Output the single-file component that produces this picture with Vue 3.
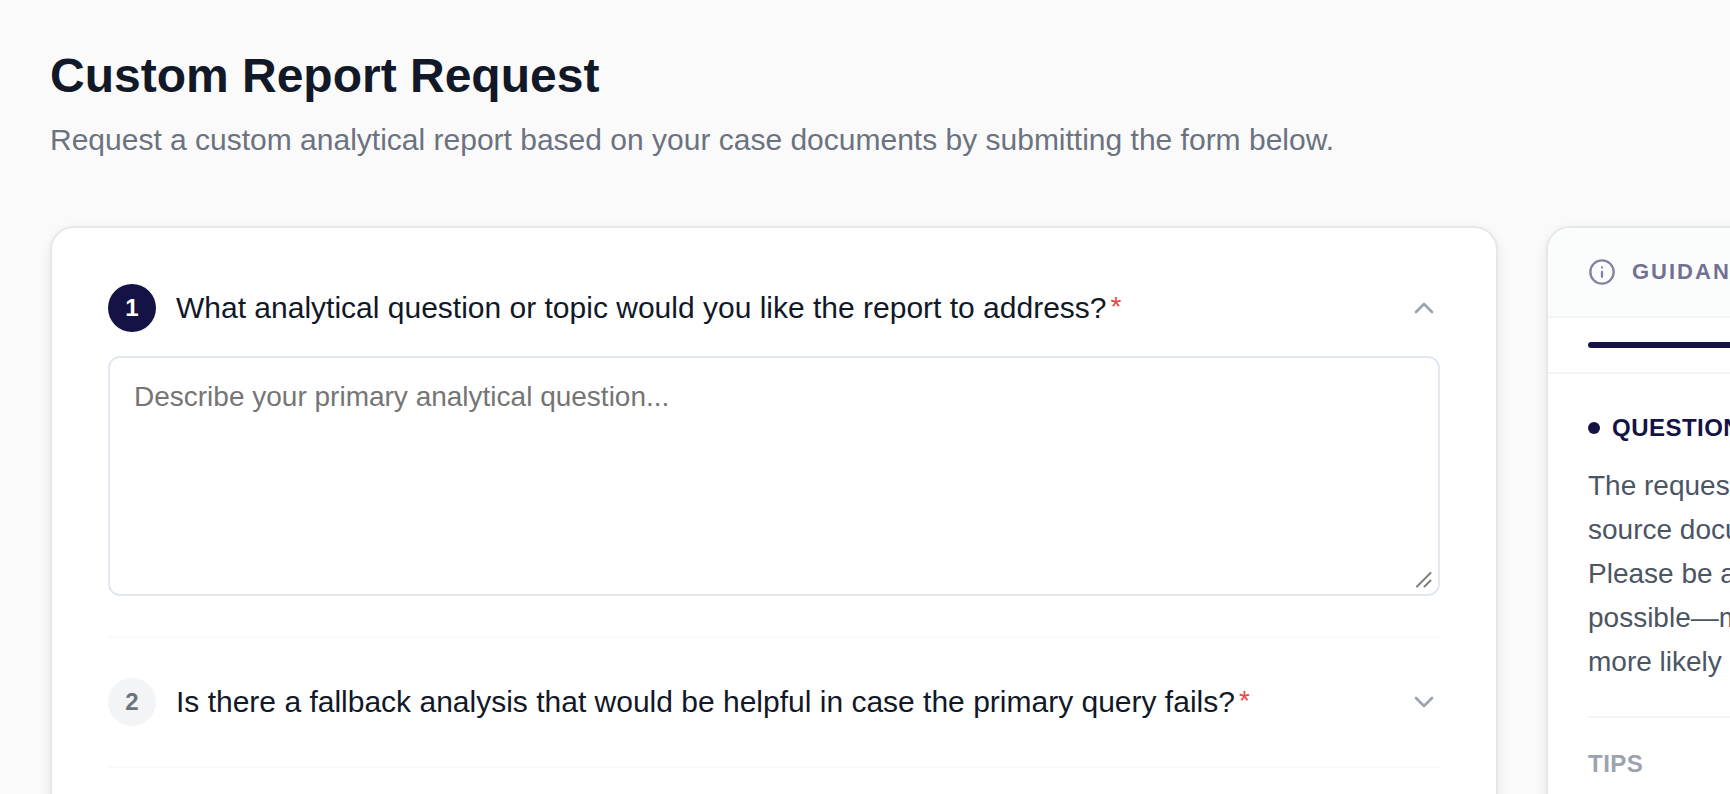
<template>
  <div class="page">
    <header class="page-header">
      <h1>Custom Report Request</h1>
      <p>Request a custom analytical report based on your case documents by submitting the form below.</p>
    </header>

    <div class="layout">
      <form class="card" @submit.prevent>
        <section v-for="(q, i) in questions" :key="i" class="question">
          <div class="question-header">
            <span class="badge" :class="{ active: open === i }">{{ i + 1 }}</span>
            <label :for="'answer-' + i" @click="open = i">{{ q.label }}<span class="required">*</span></label>
            <button type="button" class="toggle" :aria-label="'Toggle question ' + (i + 1)" @click="toggle(i)">
              <svg viewBox="0 0 24 24">
                <path :d="open === i ? 'M18 15l-6-6-6 6' : 'M6 9l6 6 6-6'" />
              </svg>
            </button>
          </div>
          <div v-show="open === i" class="answer">
            <textarea :id="'answer-' + i" v-model="q.answer" :placeholder="q.placeholder"></textarea>
            <svg class="grip" viewBox="0 0 16 16">
              <path d="M1 14.5L14.5 1M8.5 14.5l6-6" />
            </svg>
          </div>
        </section>
      </form>

      <aside class="card guidance">
        <div class="guidance-header">
          <svg viewBox="0 0 24 24">
            <circle cx="12" cy="12" r="10" />
            <path d="M12 16v-4M12 8h.01" />
          </svg>
          <h2>GUIDANCE</h2>
        </div>
        <div class="progress"><div class="bar"></div></div>
        <div class="guidance-body">
          <h3><span class="dot"></span>QUESTION {{ open + 1 }}</h3>
          <p>
            <span v-for="line in guidance" :key="line">{{ line }}</span>
          </p>
          <h4>TIPS</h4>
        </div>
      </aside>
    </div>
  </div>
</template>

<script setup>
import { ref } from 'vue'

const open = ref(0)

const questions = ref([
  {
    label: 'What analytical question or topic would you like the report to address?',
    placeholder: 'Describe your primary analytical question...',
    answer: ''
  },
  {
    label: 'Is there a fallback analysis that would be helpful in case the primary query fails?',
    placeholder: '',
    answer: ''
  }
])

const guidance = [
  'The requested',
  'source documents',
  'Please be as',
  'possible—more',
  'more likely'
]

const toggle = (i) => {
  open.value = open.value === i ? -1 : i
}
</script>

<style>
body {
  background: #fafafa;
}
</style>

<style scoped>
.page {
  box-sizing: border-box;
  height: 100vh;
  overflow: hidden;
  padding: 48px 0 0 50px;
  font-family: "Liberation Sans", Arial, sans-serif;
  color: #111827;
}
h1, h2, h3, h4, p {
  margin: 0;
}
.page-header {
  margin-bottom: 64px;
}
h1 {
  font-size: 48px;
  line-height: 56px;
}
.page-header p {
  margin-top: 14px;
  font-size: 30px;
  line-height: 44px;
  color: #6b7280;
}

/* the guidance column runs past the right edge of the window */
.layout {
  display: grid;
  grid-template-columns: minmax(0, 1fr) 640px;
  gap: 48px;
  margin-right: -456px;
}
.card {
  background: #fff;
  border: 2px solid #e5e7eb;
  border-radius: 24px;
  box-shadow: 0 4px 12px rgba(0, 0, 0, 0.08);
}
form.card {
  padding: 56px;
}

.question {
  padding-bottom: 40px;
  border-bottom: 2px solid #f9fafb;
}
.question + .question {
  padding-top: 40px;
}
.question-header {
  display: flex;
  align-items: center;
  gap: 20px;
}
.badge {
  display: flex;
  align-items: center;
  justify-content: center;
  width: 48px;
  height: 48px;
  border-radius: 50%;
  background: #f3f4f6;
  color: #6b7280;
  font-size: 24px;
  font-weight: 700;
}
.badge.active {
  background: #151346;
  color: #fff;
}
label {
  flex: 1;
  font-size: 30px;
  line-height: 44px;
}
.required {
  margin-left: 4px;
  color: #ef4444;
  font-size: 28px;
  line-height: 1;
  vertical-align: 2px;
}
.toggle {
  display: flex;
  padding: 0;
  border: 0;
  background: none;
  cursor: pointer;
}
.toggle svg {
  width: 32px;
  height: 32px;
}
svg {
  fill: none;
  stroke: #9ca3af;
  stroke-width: 2;
  stroke-linecap: round;
  stroke-linejoin: round;
}
.answer {
  position: relative;
  margin-top: 24px;
}
textarea {
  display: block;
  box-sizing: border-box;
  width: 100%;
  height: 240px;
  padding: 20px 24px;
  border: 2px solid #e2e8f0;
  border-radius: 12px;
  font-family: inherit;
  font-size: 28px;
  line-height: 38px;
  resize: vertical;
}
textarea::placeholder {
  color: #757575;
}
textarea::-webkit-resizer {
  background: transparent;
}
.grip {
  position: absolute;
  right: 8px;
  bottom: 8px;
  width: 16px;
  height: 16px;
  stroke: #7f7f7f;
  pointer-events: none;
}

.guidance {
  overflow: hidden;
  white-space: nowrap;
}
.guidance-header {
  display: flex;
  align-items: center;
  gap: 16px;
  height: 88px;
  padding: 0 40px;
  background: #fbfdfd;
  border-bottom: 2px solid #f3f4f6;
}
.guidance-header svg {
  width: 28px;
  height: 28px;
  stroke: #8583a3;
}
h2 {
  font-size: 22px;
  letter-spacing: 2px;
  color: #737191;
}
.progress {
  padding: 24px 40px;
  border-bottom: 2px solid #f3f4f6;
}
.bar {
  height: 6px;
  border-radius: 3px;
  background: #151346;
}
.guidance-body {
  padding: 40px;
}
h3, h4 {
  font-size: 24px;
  line-height: 28px;
  letter-spacing: 0.02em;
}
h3 {
  display: flex;
  align-items: center;
  gap: 12px;
  color: #151346;
}
.dot {
  width: 12px;
  height: 12px;
  border-radius: 50%;
  background: #151346;
}
.guidance-body p {
  margin-top: 22px;
  padding-bottom: 32px;
  border-bottom: 2px solid #f3f4f6;
  font-size: 28px;
  line-height: 44px;
  color: #4b5563;
}
.guidance-body p span {
  display: block;
}
h4 {
  margin-top: 32px;
  color: #9ca3af;
}
</style>
